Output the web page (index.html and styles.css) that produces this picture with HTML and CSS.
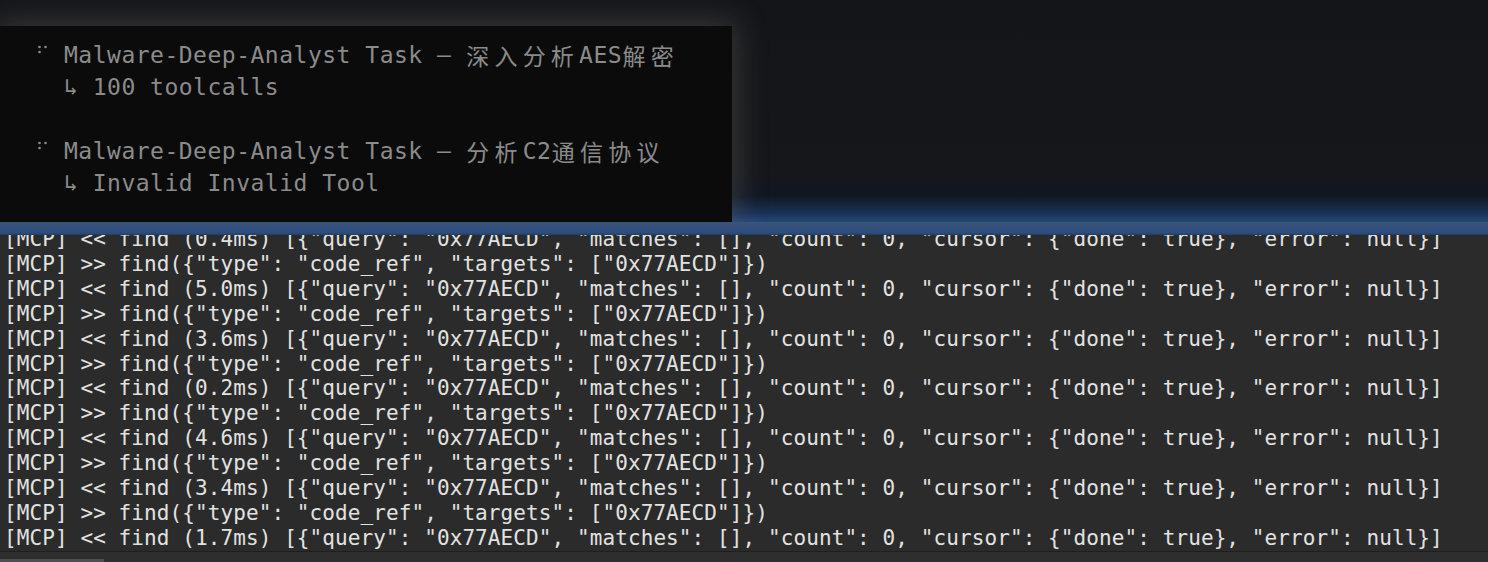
FILE: index.html
```html
<!DOCTYPE html>
<html>
<head>
<meta charset="utf-8">
<link rel="stylesheet" href="styles.css">
</head>
<body>
<div class="screen">
  <section class="top">
    <div class="popup">
      <div class="row"><svg class="dots" width="27" height="32" viewBox="0 0 27 32"><circle cx="2.5" cy="8" r="1.3"/><circle cx="2.5" cy="13" r="1.3"/><circle cx="8.5" cy="8" r="1.3"/></svg><span>Malware-Deep-Analyst Task — </span><span class="cjk">深入分析</span><span>AES</span><span class="cjk">解密</span></div>
      <div class="row sub">↳ 100 toolcalls</div>
      <div class="row"></div>
      <div class="row"><svg class="dots" width="27" height="32" viewBox="0 0 27 32"><circle cx="2.5" cy="8" r="1.3"/><circle cx="2.5" cy="13" r="1.3"/><circle cx="8.5" cy="8" r="1.3"/></svg><span>Malware-Deep-Analyst Task — </span><span class="cjk">分析</span><span>C2</span><span class="cjk">通信协议</span></div>
      <div class="row sub">↳ Invalid Invalid Tool</div>
    </div>
  </section>
  <div class="band"></div>
  <section class="term">
    <div class="lines">
      <div class="ln">[MCP] &lt;&lt; find (0.4ms) [{"query": "0x77AECD", "matches": [], "count": 0, "cursor": {"done": true}, "error": null}]</div>
      <div class="ln">[MCP] &gt;&gt; find({"type": "code_ref", "targets": ["0x77AECD"]})</div>
      <div class="ln">[MCP] &lt;&lt; find (5.0ms) [{"query": "0x77AECD", "matches": [], "count": 0, "cursor": {"done": true}, "error": null}]</div>
      <div class="ln">[MCP] &gt;&gt; find({"type": "code_ref", "targets": ["0x77AECD"]})</div>
      <div class="ln">[MCP] &lt;&lt; find (3.6ms) [{"query": "0x77AECD", "matches": [], "count": 0, "cursor": {"done": true}, "error": null}]</div>
      <div class="ln">[MCP] &gt;&gt; find({"type": "code_ref", "targets": ["0x77AECD"]})</div>
      <div class="ln">[MCP] &lt;&lt; find (0.2ms) [{"query": "0x77AECD", "matches": [], "count": 0, "cursor": {"done": true}, "error": null}]</div>
      <div class="ln">[MCP] &gt;&gt; find({"type": "code_ref", "targets": ["0x77AECD"]})</div>
      <div class="ln">[MCP] &lt;&lt; find (4.6ms) [{"query": "0x77AECD", "matches": [], "count": 0, "cursor": {"done": true}, "error": null}]</div>
      <div class="ln">[MCP] &gt;&gt; find({"type": "code_ref", "targets": ["0x77AECD"]})</div>
      <div class="ln">[MCP] &lt;&lt; find (3.4ms) [{"query": "0x77AECD", "matches": [], "count": 0, "cursor": {"done": true}, "error": null}]</div>
      <div class="ln">[MCP] &gt;&gt; find({"type": "code_ref", "targets": ["0x77AECD"]})</div>
      <div class="ln">[MCP] &lt;&lt; find (1.7ms) [{"query": "0x77AECD", "matches": [], "count": 0, "cursor": {"done": true}, "error": null}]</div>
    </div>
  </section>
  <div class="footer"><div class="tab"></div></div>
</div>
</body>
</html>
```

FILE: styles.css
```css
* { box-sizing: border-box; }
html, body {
  margin: 0;
  padding: 0;
  width: 1488px;
  height: 562px;
  overflow: hidden;
  background: #16171a;
}
.screen {
  width: 1488px;
  height: 562px;
  display: flex;
  flex-direction: column;
}
.top {
  height: 222px;
  padding-top: 26px;
  background: linear-gradient(to bottom, #141518 0px, #16171a 170px, #101722 196px, #1a3358 214px, #27477a 222px);
  flex: none;
}
.popup {
  width: 732px;
  height: 196px;
  background: #0b0b0b;
  padding: 13px 0 0 37px;
  box-shadow: 0 0 28px 6px rgba(120, 120, 120, 0.32);
  font-family: "DejaVu Sans Mono", "Liberation Mono", monospace;
  font-size: 23px;
  letter-spacing: 0.5px;
  color: #8b8b8b;
}
.row {
  height: 32px;
  line-height: 32px;
  display: flex;
  align-items: flex-start;
  white-space: pre;
}
.row.sub { padding-left: 27px; }
.dots { flex: none; fill: #8b8b8b; }
.cjk {
  font-family: "Noto Sans CJK SC", "DejaVu Sans", sans-serif;
  font-size: 23px;
  letter-spacing: 5.2px;
  padding-left: 0.5px;
}
.band {
  height: 13px;
  flex: none;
  background: linear-gradient(to bottom, #3a5478 0px, #34507c 6px, #2a4c82 11px, #2b3a52 13px);
}
.term {
  height: 316px;
  flex: none;
  overflow: hidden;
  background: #2b2b2b;
  padding-left: 4px;
}
.lines {
  margin-top: -7.8px;
  font-family: "DejaVu Sans Mono", "Liberation Mono", monospace;
  font-size: 21px;
  letter-spacing: 0.09px;
  color: #e2e2e2;
}
.ln {
  height: 24.86px;
  line-height: 24.86px;
  white-space: pre;
}
.footer {
  flex: 1;
  background: #2e2e2e;
  border-top: 1px solid #1f1f1f;
  display: flex;
  align-items: flex-end;
}
.tab {
  width: 104px;
  height: 3px;
  background: #4f4f4f;
}
```
